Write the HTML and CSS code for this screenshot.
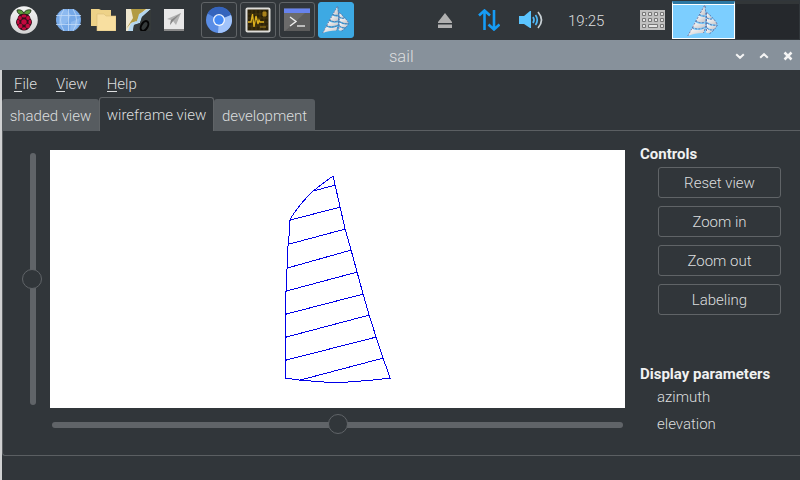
FILE: index.html
```html
<!DOCTYPE html>
<html lang="en">
<head>
<meta charset="utf-8">
<title>sail</title>
<link rel="stylesheet" href="styles.css">
</head>
<body>
<svg width="0" height="0" class="defs">
  <defs>
    <linearGradient id="silver" x1="0" y1="0" x2="1" y2="1"><stop offset="0" stop-color="#fff"/><stop offset="1" stop-color="#c4c2c6"/></linearGradient>
    <linearGradient id="ring" x1="0" y1="0" x2="0" y2="1"><stop offset="0" stop-color="#f4f4f4"/><stop offset="1" stop-color="#d4d4d4"/></linearGradient>
    <symbol id="sails" viewBox="0 0 32 32">
      <g fill="url(#silver)">
        <path d="M17.500 .5L12.500 9Q15 10.500 18.500 10Z"/>
        <path d="M11.800 10.500L8.800 15.500Q13 18.500 18.500 16.500V12Q14.500 12.500 11.800 10.500Z"/>
        <path d="M8 17L5.200 22Q11 24.500 18.300 21.500L18.500 18.500Q12 20 8 17Z"/>
        <path d="M4.500 23.500L.8 31Q7 28 16.500 28L18 23.500Q10 26.500 4.500 23.500Z"/>
        <path d="M19.800 7.500V12Q22 14 25 13Q22.500 10 19.800 7.500Z"/>
        <path d="M20 13.500V17Q25 20 30.500 19.500Q29 16.500 26 14Q23 15.500 20 13.500Z"/>
        <path d="M20 18.500L19.700 22Q23 25 27.500 24L30 20.800Q24 22 20 18.500Z"/>
        <path d="M19.600 23.500L19 27.500Q21 29 23.500 27.500L26 25.500Q22 26 19.600 23.500Z"/>
      </g>
      <path d="M17.500 .5L.8 31M18 1Q20 14 18 24L16.500 28M19.800 7.500Q28 14 30.500 20Q27 26 22 29M12.500 9.500Q15 11.500 18.500 11M8.500 16Q13 19 18.500 17M5 22.500Q11 25.500 18 22.500M19.500 7.500V27M20 13Q23 15 26 13.500M20 18Q25 21 30 20M20 23Q23 26 27 24.500" fill="none" stroke="#5c6092" stroke-width=".8" stroke-dasharray="2 1.300"/>
    </symbol>
  </defs>
</svg>

<header class="taskbar">
  <svg class="launcher" width="28" height="28" viewBox="0 0 28 28">
    <circle cx="14" cy="14" r="13.800" fill="url(#ring)"/>
    <path d="M13.800 9Q7 9 7 4Q12 3 13.800 7Q16 3 21 4Q21 9 13.800 9Z" fill="#5c9c3c" stroke="#26361e" stroke-width=".9"/>
    <path d="M14 7.500Q20 8 20.500 12.500Q23.500 16 20.500 20Q18 24.500 14 24.500Q10 24.500 7.500 20Q4.500 16 7.500 12.500Q8 8 14 7.500Z" fill="#35101a"/>
    <g fill="#c4093f"><ellipse cx="14" cy="10" rx="2.500" ry="1.500"/><circle cx="10" cy="12" r="1.900"/><circle cx="18" cy="12" r="1.900"/><circle cx="14" cy="16" r="2.700"/><ellipse cx="8.200" cy="16" rx="1.400" ry="2.300"/><ellipse cx="19.800" cy="16" rx="1.400" ry="2.300"/><circle cx="10.300" cy="20" r="2.200"/><circle cx="17.700" cy="20" r="2.200"/><ellipse cx="14" cy="22.600" rx="2.200" ry="1.400"/></g>
  </svg>
  <svg class="launcher globe" width="25" height="22" viewBox="0 0 25 22">
    <ellipse cx="12.500" cy="11" rx="12.500" ry="12" fill="#76a9e8"/>
    <path d="M3 4L10 0 15 6 11 14 3 17ZM15 13L24 9 21 19 14 22Z" fill="#8dbaf0"/>
    <path d="M12.500 0V22M0 6.500H25M0 15.500H25M8 0Q1 11 8 22M17 0Q24 11 17 22" fill="none" stroke="#c1dbf8" stroke-width=".8"/>
  </svg>
  <svg class="launcher folders" width="25" height="22" viewBox="0 0 25 22">
    <path d="M0 0H8L10 1H20V17H0Z" fill="#eed288"/><path d="M6 5H13L15 7H25V22H6Z" fill="#f8dfa0" stroke="#d9bd78" stroke-width=".6"/>
  </svg>
  <svg class="launcher map" width="25" height="22" viewBox="0 0 25 22">
    <path d="M0 0H25L15 6 13 11 6 15 4 22H0Z" fill="#eee6cf"/><path d="M5 0H20L14 5 11 12 5 14 0 20 7 9Z" fill="#b29b42"/>
    <path d="M22 0H25L16 8 14 14 8 16 7 22H2L5 14 11 12 13 5Z" fill="#b5d7ee"/><path d="M25 0V22H7L8 16 14 14 16 8Z" fill="#353a3a"/>
    <ellipse cx="18.500" cy="17" rx="3.200" ry="5.300" transform="rotate(30 18.500 17)" fill="none" stroke="#050505" stroke-width="2"/>
  </svg>
  <svg class="launcher mail" width="20" height="22" viewBox="0 0 20 22">
    <path d="M0 0H20V22H0Z" fill="#e8e8e8"/><path d="M0 20H20V22H0Z" fill="#8b8b8b"/><path d="M3 10L17 4 12 16 9 12 6 16 7 11Z" fill="#b2b2b2"/><path d="M7 11L17 4 9 12 6 16Z" fill="#858585"/>
  </svg>

  <div class="task task-first"><svg width="28" height="28" viewBox="0 0 28 28">
    <circle cx="14" cy="14" r="13" fill="#5a8de5"/><path d="M14 14L2.500 7.500A13 13 0 0 1 26 9Z" fill="#3564bd"/><path d="M14 14L26 9A13 13 0 0 1 13 27Z" fill="#a1c3fa"/>
    <circle cx="14" cy="14" r="6" fill="#f1f5fc"/><circle cx="14" cy="14" r="4.700" fill="#4389f5"/>
  </svg></div>
  <div class="task"><svg width="28" height="28" viewBox="0 0 28 28">
    <rect x="1.500" y="1.500" width="25" height="25" rx="2" fill="#deddd9"/><rect x="3.500" y="3.500" width="21" height="21" fill="#2c2209"/>
    <path d="M8 4V24M12 4V24M16 4V24M20 4V24M4 8H24M4 12H24M4 16H24M4 20H24" stroke="#594510" stroke-width=".6"/>
    <path d="M4 16H7L8.500 8 10 21 12 10 14 18 15 14 16 16H20" fill="none" stroke="#ddb01d" stroke-width="1.300"/><path d="M19 6h3v4h-3zM16 21h6" fill="#a9821a" stroke="#a9821a"/>
  </svg></div>
  <div class="task"><svg width="28" height="28" viewBox="0 0 28 28">
    <path d="M1 2.500H27V25H1Z" fill="#5c5c5c"/><path d="M1 7H22L2 25H1Z" fill="#6b6b6b"/><path d="M1 2.500H27V7H1Z" fill="#6783ee"/><path d="M7 11L13 15.500 7 20" fill="none" stroke="#eee" stroke-width="1.400"/><path d="M14 20H22" stroke="#ddd" stroke-width="1.500"/>
  </svg></div>
  <div class="task task-active"><svg width="28" height="28"><use href="#sails"/></svg></div>

  <svg class="eject" width="14" height="15" viewBox="0 0 14 15"><path d="M7 0L14 9V10H0V9ZM0 11.500H14V15H0Z" fill="#b0b0b0"/></svg>
  <svg class="network" width="22" height="22" viewBox="0 0 22 22"><path d="M6.500 21V2M1 6.500L6.500 1.500 12 6.500M16 1V20M10.500 15.500L16 20.500 21.500 15.500" fill="none" stroke="#169cf5" stroke-width="2.600"/></svg>
  <svg class="volume" width="24" height="18" viewBox="0 0 24 18"><path d="M0 5H5L11 0H12V17H11L5 13H0Z" fill="#5bc5ff"/><path d="M14 6Q16 9 14 12M16.500 4Q20 9 16.500 14" fill="none" stroke="#50bafa" stroke-width="1.700"/><path d="M19 1Q26 9 19 17" fill="none" stroke="#c7cfd3" stroke-width="1.700"/></svg>
  <time class="clock">19:25</time>
  <svg class="keyboard" width="25" height="20" viewBox="0 0 25 20"><path d="M0 0H25V20H0Z" fill="#c0c0c0"/><g fill="#e5e5e5" stroke="#777" stroke-width="1"><path d="M2.500 2.500h3v3h-3zM8.500 2.500h3v3h-3zM14.500 2.500h3v3h-3zM20.500 2.500h3v3h-3zM2.500 8.500h3v3h-3zM8.500 8.500h3v3h-3zM14.500 8.500h3v3h-3zM20.500 8.500h3v3h-3zM2.500 14.500h3v3h-3zM8.500 14.500h9v3h-9zM20.500 14.500h3v3h-3z"/></g></svg>
  <div class="desk desk-current"><svg width="32" height="32"><use href="#sails"/></svg></div>
  <div class="desk"></div>
</header>

<section class="window">
  <div class="titlebar">
    <h1>sail</h1>
    <svg width="58" height="10" viewBox="0 0 58 10" fill="none" stroke="#f4f4f4" stroke-width="2"><path d="M1.200 3.200L5 6.800 8.800 3.200M25.200 6.800L29 3.200 32.800 6.800"/><path d="M49.500 1.500L56.500 8.500M56.500 1.500L49.500 8.500" stroke-width="2.500"/></svg>
  </div>
  <div class="frame">
    <nav class="menu"><span><u>F</u>ile</span><span><u>V</u>iew</span><span><u>H</u>elp</span></nav>
    <div class="tabs"><div class="tab tab-shaded">shaded view</div><div class="tab tab-open">wireframe view</div><div class="tab tab-dev">development</div></div>
    <main class="page">
      <div class="slider slider-v"><i></i></div>
      <div class="view">
        <svg class="canvas" width="575" height="258" viewBox="49.900 149.900 575 258">
          <path d="M333 176Q324 182 313 191Q300 203 290 219L289 235 288 244 287 267 286 291 285 292V378L300 380 325 382H347L372 380 390 378 383 358 376 337 369 315 363 294 357 272 351 250 345 229 340 207 335 185Z"/>
          <path d="M313 191L335 185M290 220L340 207M289 244L345 229M287 268L351 250M286 291L357 272M286 314L363 294M286 337L369 315M286 360L376 337M300 380L383 358"/>
        </svg>
        <div class="slider slider-h"><i></i></div>
      </div>
      <aside class="side">
        <h2>Controls</h2>
        <button>Reset view</button><button>Zoom in</button><button>Zoom out</button><button>Labeling</button>
        <h2 class="display">Display parameters</h2>
        <p>azimuth</p><p>elevation</p>
      </aside>
    </main>
  </div>
</section>
</body>
</html>
```
FILE: styles.css
```css
* { box-sizing: border-box; margin: 0; padding: 0; }
body { width: 800px; height: 480px; overflow: hidden; background: #31363a; color: #dcdedf; font: 300 15px/20px Roboto, sans-serif; }
.defs { position: absolute; }
svg { display: block; flex: none; }
.taskbar { display: flex; height: 40px; align-items: center; }
.launcher { margin-left: 10px; }
.globe { margin-left: 18px; }
.folders { margin-left: 10px; }
.map { margin-left: 10px; }
.mail { margin-left: 13px; }
.task { flex: none; width: 36px; height: 36px; margin-left: 3px; border: 1px solid #606467; border-radius: 3px; display: flex; align-items: center; justify-content: center; }
.task-first { margin-left: 17px; }
.task-active { background: #3da9e3; border-color: #3da9e3; }
.eject { margin-left: 84px; }
.network { margin-left: 26px; }
.volume { margin-left: 19px; }
.clock { margin-left: 25px; width: 40px; margin-top: 2px; }
.keyboard { margin-left: 32px; }
.desk { flex: none; width: 63px; height: 38px; margin-left: 1px; border-top: 3px solid #323638; background: #25282c; }
.desk-current { margin-left: 7px; padding-right: 2px; background: #7cceff; border: 1px solid #fff; border-top: 3px solid #2c78a4; box-shadow: inset 0 1px #fff; display: flex; align-items: center; justify-content: center; }
.titlebar { height: 30px; background: #87919b; display: flex; align-items: center; padding: 2px 7px 0 389px; justify-content: space-between; }
h1 { font-size: 16.5px; font-weight: 300; padding-top: 2px; }
.frame { height: 410px; border-left: 2px solid #d0d1d2; }
.menu { height: 27px; padding: 4px 0 0 12px; display: flex; gap: 19px; }
u { text-decoration: none; box-shadow: 0 -1px #dcdedf inset; display: inline-block; height: 18px; line-height: 20px; }
.tabs { display: flex; height: 34px; align-items: flex-end; background: linear-gradient(#5b5f62, #5b5f62) bottom / 100% 1px no-repeat; }
.tab { height: 32px; line-height: 35px; background: #575c60; border-radius: 3px 3px 0 0; text-align: center; }
.tab-shaded { width: 97px; }
.tab-open { width: 115px; height: 34px; background: #31363a; border: 1px solid #606467; border-bottom: 0; }
.tab-dev { width: 101px; }
.page { display: flex; height: 325px; padding-top: 19px; border: 1px solid #5b5f62; border-width: 0 0 1px 1px; border-radius: 0 0 0 3px; }
.slider { background: #606468; border-radius: 3px; display: flex; align-items: center; justify-content: center; }
.slider i { flex: none; width: 20px; height: 20px; border: 1px solid #606468; border-radius: 50%; background: #31363a; }
.slider-v { width: 6px; height: 252px; margin: 3px 14px 0 27px; }
.slider-v i { margin-right: 2px; }
.view { width: 575px; }
.canvas { background: #fff; fill: none; stroke: #0000e8; shape-rendering: crispEdges; }
.slider-h { width: 571px; height: 6px; margin: 14px 2px 0; }
.slider-h i { margin-bottom: 2px; }
.side { padding-left: 15px; }
h2 { font-size: 15px; line-height: 20px; font-weight: 700; color: #f0f1f1; margin: -6px 0 3px; }
button { display: block; width: 123px; height: 31px; margin: 0 0 8px 18px; background: #31363a; border: 1px solid #606467; border-radius: 3px; color: inherit; font: inherit; }
.display { margin: 49px 0 3px; }
p { margin: 0 0 7px 17px; }
```
